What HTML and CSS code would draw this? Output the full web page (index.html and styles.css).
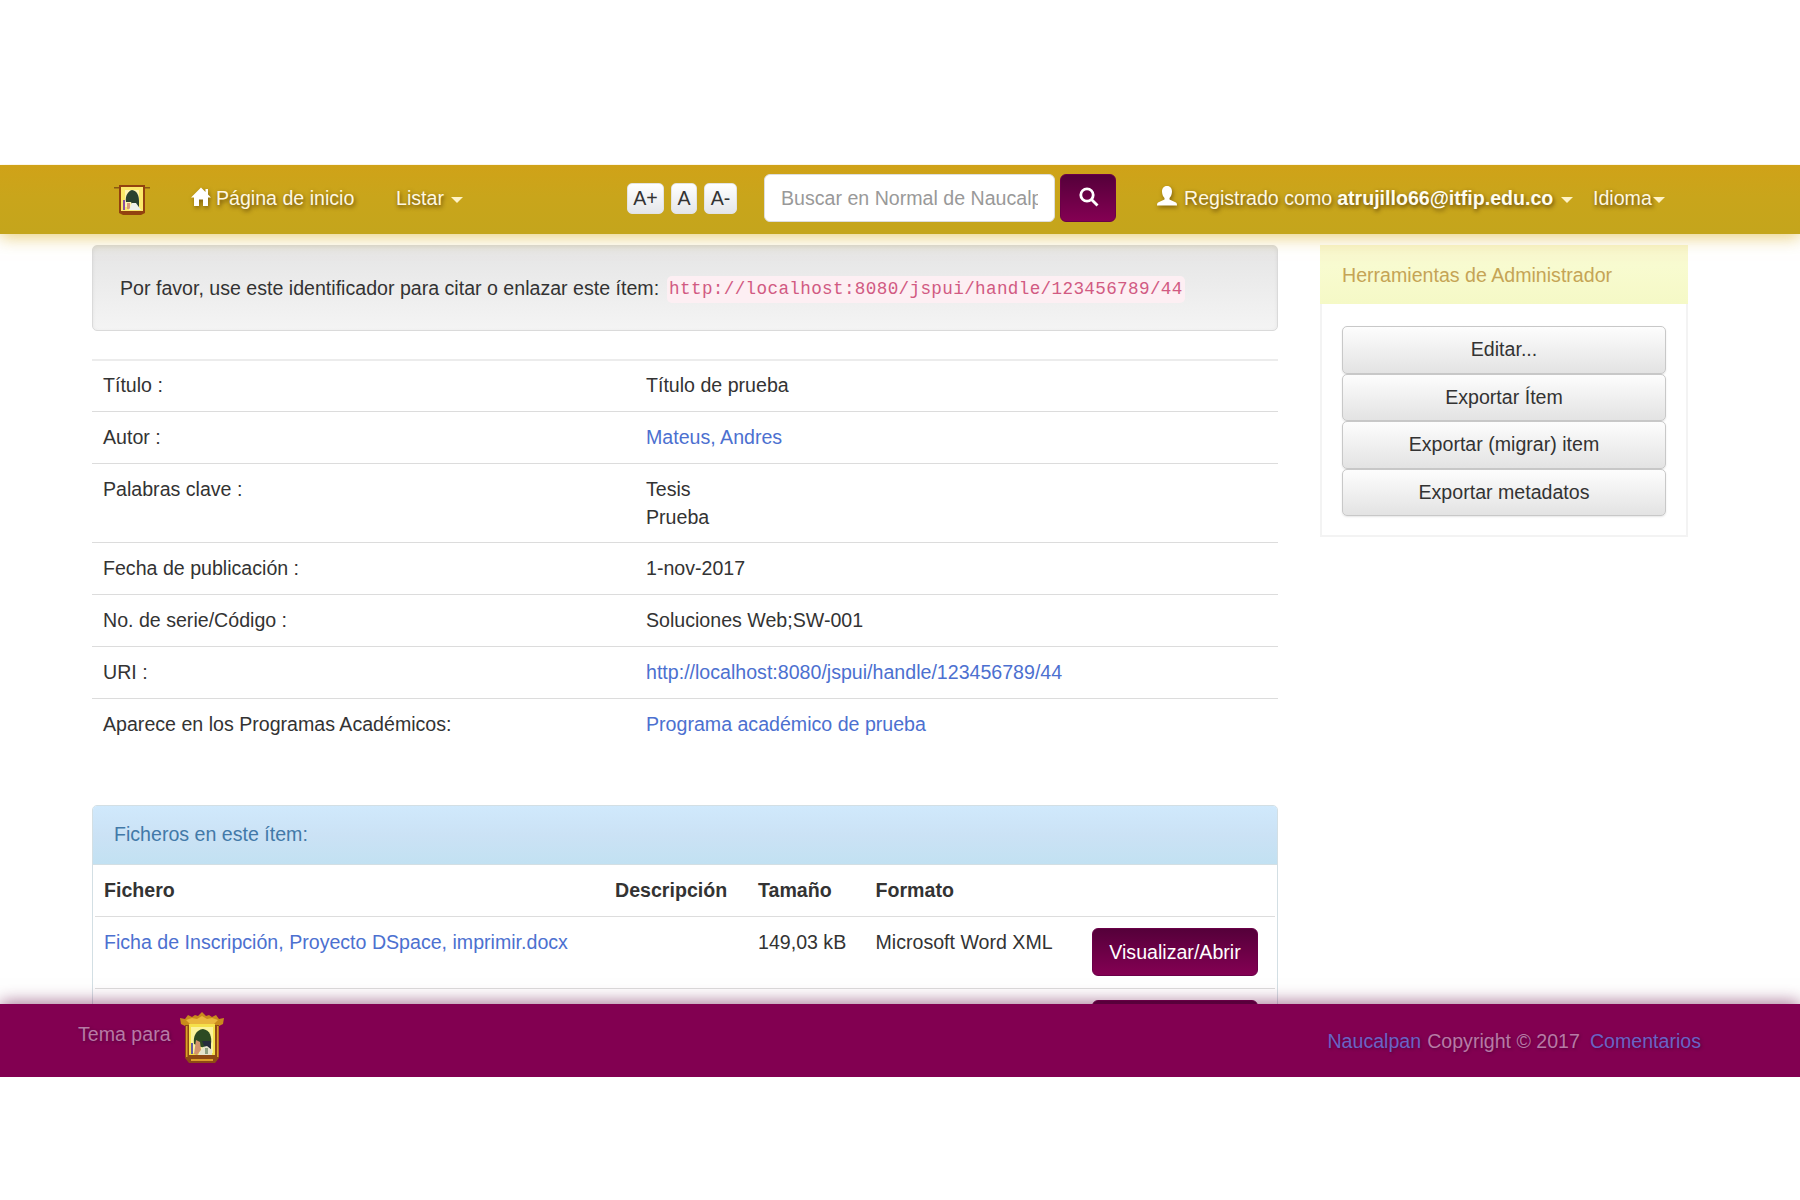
FILE: index.html
```html
<!DOCTYPE html>
<html lang="es">
<head>
<meta charset="utf-8">
<title>Título de prueba</title>
<link rel="stylesheet" href="styles.css">
</head>
<body>
<svg class="defs" width="0" height="0">
  <defs>
    <symbol id="crest" viewBox="0 0 46 52">
      <path d="M1 6l5 1 3-4 4 2 3-2 3 1 4-4 4 4 3-1 3 2 4-2 3 4 5-1-1 6-4 2-1 7H7L6 14l-4-2z" fill="#c98a1c"/>
      <path d="M7 8l6-2 5 1 5-3 5 3 5-1 6 2-4 4H11z" fill="#e9b53c"/>
      <path d="M6 13h34v33l-4 5H10l-4-5z" fill="#8e4a14"/>
      <path d="M7 14h1.500v31H7zM38 14h1.500v31H38zM12 47h22v2H12z" fill="#dc9d2a"/>
      <path d="M10 12h26v31H10z" fill="#f5e04a"/>
      <path d="M12 15h22v26H12z" fill="#fbf39a"/>
      <path d="M15 32c-1-8 2-14 9-15 7 1 9 8 8 15l-4 4-6-1z" fill="#2c4a22"/>
      <path d="M23 29h9v9h-5z" fill="#262c3c"/>
      <path d="M12 31h2v11h-2z" fill="#665ca0"/>
      <path d="M17 28l4 2 1 8-4 5-3-1z" fill="#d3936c"/>
      <path d="M19 43l5-8 4-1 5 4v5z" fill="#e6e4cc"/>
      <path d="M26 36h3v6h-3z" fill="#8fa080"/>
    </symbol>
    <symbol id="crest-small" viewBox="0 0 36 32">
      <path d="M0 4h6v1.500H0zM31 4h5v1.500h-5z" fill="#8a5a14"/>
      <path d="M5 2h26v28l-4 2H9l-4-2z" fill="#93420f"/>
      <path d="M7 4h22v24H7z" fill="#fbe96a"/>
      <path d="M11 7h14v17H11z" fill="#fff3b0"/>
      <path d="M12 19c-1-6 2-11 6-12 5 1 7 5 7 11v7h-5l-3-6z" fill="#2a4130"/>
      <path d="M9 17h2v10H9z" fill="#8c4f9e"/>
      <path d="M13 20h3v6h-3z" fill="#d89a7c"/>
      <path d="M15 27l3-7h4l5 7z" fill="#eef0ea"/>
    </symbol>
  </defs>
</svg>
<header class="navbar">
  <svg class="brand"><use href="#crest-small"/></svg>
  <a class="nav-link home"><svg class="icon-home" viewBox="0 0 20 19"><path d="M10 0L0 10h3v8.500h5V12h4v6.500h5V10h3l-3-3V1.500h-2.500v3z"/></svg><span>Página de inicio</span></a>
  <a class="nav-link list"><span>Listar</span><i class="caret"></i></a>
  <div class="sizes"><button class="size big">A+</button><button class="size">A</button><button class="size small">A-</button></div>
  <div class="search"><div class="field"><span>Buscar en Normal de Naucalpan</span></div><button class="primary go"><svg viewBox="0 0 20 20"><circle cx="8" cy="8" r="6.200"/><path d="M12.500 12.500l6 6"/></svg></button></div>
  <a class="nav-link user"><svg class="icon-user" viewBox="0 0 20 20"><path d="M10 0c3.500 0 5 2.500 5 5.500 0 2.500-1 5-2.500 6.500v1.500L19 16.500q1 .5 1 2.500v.5H0V19q0-2 1-2.500l6.500-3V12C6 10.500 5 8 5 5.500 5 2.500 6.500 0 10 0z"/></svg><span>Registrado como</span><b>atrujillo66@itfip.edu.co</b><i class="caret"></i></a>
  <a class="nav-link lang"><span>Idioma</span><i class="caret"></i></a>
</header>
<main class="container">
  <section class="content">
    <div class="well"><span>Por favor, use este identificador para citar o enlazar este ítem:</span><code>http://localhost:8080/jspui/handle/123456789/44</code></div>
    <dl class="metadata">
      <div><dt>Título :</dt><dd>Título de prueba</dd></div>
      <div><dt>Autor :</dt><dd><a>Mateus, Andres</a></dd></div>
      <div><dt>Palabras clave :</dt><dd>Tesis<br>Prueba</dd></div>
      <div><dt>Fecha de publicación :</dt><dd>1-nov-2017</dd></div>
      <div><dt>No. de serie/Código :</dt><dd>Soluciones Web;SW-001</dd></div>
      <div><dt>URI :</dt><dd><a>http://localhost:8080/jspui/handle/123456789/44</a></dd></div>
      <div><dt>Aparece en los Programas Académicos:</dt><dd><a>Programa académico de prueba</a></dd></div>
    </dl>
    <div class="files">
      <h2>Ficheros en este ítem:</h2>
      <div class="file-row head"><b>Fichero</b><b>Descripción</b><b>Tamaño</b><b>Formato</b></div>
      <div class="file-row"><a>Ficha de Inscripción, Proyecto DSpace, imprimir.docx</a><span></span><span>149,03 kB</span><span>Microsoft Word XML</span><button class="primary open">Visualizar/Abrir</button></div>
      <div class="file-row"><span></span><span></span><span></span><span></span><button class="primary open"></button></div>
    </div>
  </section>
  <aside class="tools">
    <h2>Herramientas de Administrador</h2>
    <div class="tool-list">
      <button>Editar...</button>
      <button>Exportar Ítem</button>
      <button>Exportar (migrar) item</button>
      <button>Exportar metadatos</button>
    </div>
  </aside>
</main>
<footer class="footer">
  <div class="theme"><span>Tema para</span><svg class="crest"><use href="#crest"/></svg></div>
  <p><a>Naucalpan</a><span class="copy">Copyright © 2017</span><a>Comentarios</a></p>
</footer>
</body>
</html>
```
FILE: styles.css
```css
* { box-sizing: border-box; }
body { margin: 0; padding-top: 164.500px; height: 1200px; overflow: hidden; background: #fff; color: #333; font: 19.6px/28px "Liberation Sans", Arial, sans-serif; }
.defs { position: absolute; }
h2, p, dl, dd { margin: 0; }
h2 { font-size: inherit; font-weight: 400; }
a { color: #4c70d0; text-decoration: none; }
button { font: inherit; padding: 0; color: #333; }
svg { display: block; flex: none; }
span, b { white-space: nowrap; }

.navbar { position: relative; height: 69px; padding: 0 0 2px 114px; display: flex; align-items: center; background: linear-gradient(#d0a218, #c9a51b 45%, #c4a51c); box-shadow: 0 3px 16px rgba(220, 180, 50, .65); clip-path: inset(0 0 -30px 0); }
.nav-link { display: flex; align-items: center; height: 28px; color: #fff8e2; text-shadow: 1px 2px 4px rgba(60, 35, 0, .75); fill: #fff; }
.nav-link svg { filter: drop-shadow(1px 2px 2px rgba(60, 35, 0, .5)); }
.nav-link b { color: #fffdf0; }
.brand { width: 36px; height: 32px; margin-top: 2px; }
.caret { border: 6px solid transparent; border-top-color: #fff3c8; border-bottom: 0; margin-top: 3px; }
.home { width: 205px; margin-left: 41px; gap: 5px; }
.icon-home { width: 20px; height: 20px; margin-top: -3px; }
.list { width: 231px; gap: 7px; }
.sizes { display: flex; gap: 7px; width: 137px; }
.size { width: 26px; height: 31px; border: 1px solid #e3e3e3; border-radius: 5px; background: linear-gradient(#fff, #e4e6ea); line-height: 27px; }
.size.big { width: 37px; }
.size.small { width: 33px; }
.search { display: flex; gap: 5px; }
.field { width: 291px; height: 48px; border: 1px solid #ddd; border-radius: 6px; background: #fff; padding: 9px 16px; color: #999; }
.field span { display: block; overflow: hidden; }
.primary { border: 1px solid #6a0048; border-radius: 6px; background: linear-gradient(#55003a, #840053); color: #fff; }
.go { width: 56px; height: 48px; display: flex; align-items: center; justify-content: center; }
.go svg { width: 20px; height: 20px; margin: -2px 0 0 1px; fill: none; stroke: #fff; stroke-width: 2.800; }
.user { width: 436px; margin-left: 41px; }
.icon-user { width: 20px; height: 20px; margin: -4px 7px 0 0; }
.user b { margin: 0 8px 0 5px; }
.lang { gap: 1px; }

.container { display: flex; align-items: flex-start; justify-content: space-between; width: 1596px; margin-left: 92px; height: 770.500px; overflow: hidden; padding-top: 11.500px; }
.content { width: 1186px; }
.well { height: 86px; padding: 0 27px 1px; display: flex; align-items: center; border: 1px solid #dadada; border-radius: 5px; background: linear-gradient(#e5e5e5, #f4f4f4); box-shadow: inset 0 1px 4px rgba(0, 0, 0, .06); }
code { margin: 4px 0 0 8px; padding: 2px 2px; border-radius: 5px; background: #fdeff3; color: #d15a82; font: 17.640px/23px "Liberation Mono", monospace; letter-spacing: .35px; }
.metadata { margin-top: 27.500px; }
.metadata > div { display: flex; padding: 11px 11px 11.800px; border-top: 1px solid #dcdcdc; }
.metadata > div:first-child { border-top: 2px solid #ececec; padding: 10px 11px 12.300px; }
.metadata dt { width: 543px; }
.files { height: 250px; margin-top: 55px; border: 1px solid #d3dfe4; border-radius: 5px 5px 0 0; overflow: hidden; }
.files h2 { height: 59px; padding: 14px 21px; color: #4279a8; background: linear-gradient(#d0e9fc, #cbe2f5 50%, #c2e1f2); border-bottom: 1px solid #d3dfe4; }
.file-row { height: 72px; margin: 0 2px; padding: 11px 9px; display: grid; grid-template-columns: 511px 143px 117.500px 216.500px 166px; align-items: start; border-top: 1px solid #ddd; }
.file-row.head { height: 51px; border: 0; }
.open { width: 166px; height: 48px; }

.tools { width: 368px; height: 291px; margin-top: 1px; border: 1px solid #f3f3f3; border-width: 0 2px 2px; }
.tools h2 { height: 59px; margin: -1px -2px 0; padding: 16px 22px; color: #c5a455; background: linear-gradient(#f8f5cd, #f8fbd0 35%, #f5f9c6); }
.tool-list { display: flex; flex-direction: column; padding: 22px 20px; }
.tool-list button { height: 47.600px; padding-bottom: 1px; border: 1px solid #c8c8c8; border-radius: 5px; background: linear-gradient(#fdfdfd, #e3e3e3); box-shadow: 0 1px 2px rgba(0, 0, 0, .1); }

.footer { position: relative; height: 73px; padding: 0 99px 0 78px; display: flex; justify-content: space-between; background: #820051; color: #b77aa5; box-shadow: 0 -2px 16px rgba(95, 0, 62, .55); clip-path: inset(-30px 0 0 0); text-shadow: 1px 1px 3px rgba(50, 0, 50, .5); }
.footer a { color: #6a63c5; }
.theme { display: flex; gap: 8px; padding-top: 8px; line-height: 45px; }
.crest { width: 46px; height: 52px; }
.footer p { line-height: 75px; }
.copy { margin: 0 10px 0 6px; }
```
